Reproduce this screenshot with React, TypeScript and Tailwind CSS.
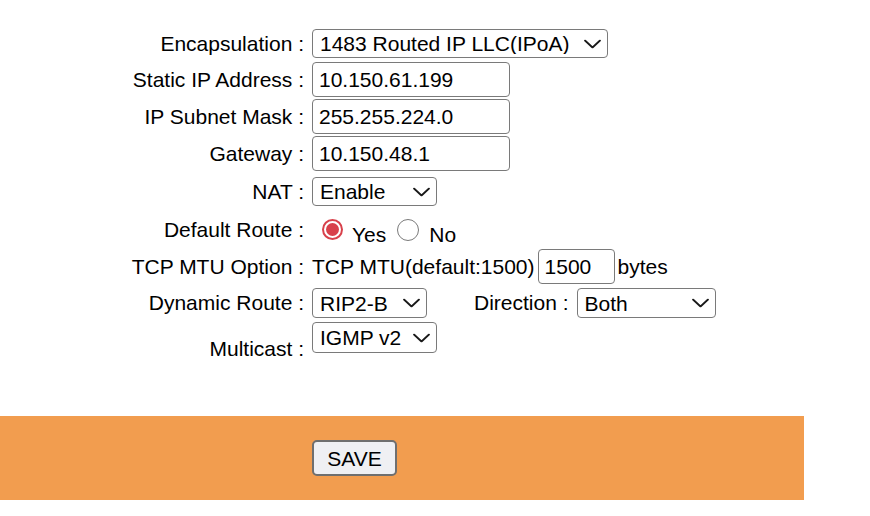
import React from 'react';

const font = { fontFamily: '"Liberation Sans", Arial, Helvetica, sans-serif' };

function Chevron() {
  return (
    <svg width="17" height="9" viewBox="0 0 17 9" fill="none" className="pointer-events-none absolute right-[7px] top-1/2 -translate-y-1/2">
      <path d="M1 1 L8.5 8 L16 1" stroke="#1a1a1a" strokeWidth="1.8" strokeLinecap="round" strokeLinejoin="round" />
    </svg>
  );
}

function Select({ value, options, w, h }: { value: string; options: string[]; w: string; h: string }) {
  return (
    <div className={`relative ${w} ${h}`}>
      <select
        defaultValue={value}
        className="h-full w-full appearance-none rounded-[4px] border border-[#7a7a7a] bg-white pl-[7px] text-[21px] leading-none text-black outline-none"
      >
        {options.map((o) => (
          <option key={o}>{o}</option>
        ))}
      </select>
      <Chevron />
    </div>
  );
}

function TextInput({ value, w }: { value: string; w: string }) {
  return (
    <input
      defaultValue={value}
      className={`${w} h-[35px] rounded-[4px] border border-[#7a7a7a] bg-white px-[6px] text-[21px] leading-none text-black outline-none`}
    />
  );
}

function Label({ children }: { children: React.ReactNode }) {
  return <div className="w-[304px] shrink-0 text-right">{children}</div>;
}

function Radio({ checked }: { checked?: boolean }) {
  return checked ? (
    <span className="flex h-[21px] w-[21px] shrink-0 items-center justify-center rounded-full border-2 border-[#d8414b] bg-white">
      <span className="block h-[13px] w-[13px] rounded-full bg-[#d8414b]" />
    </span>
  ) : (
    <span className="block h-[22px] w-[22px] shrink-0 rounded-full border border-[#7a7a7a] bg-white" />
  );
}

export default function App() {
  return (
    <div className="min-h-[516px] w-[870px] bg-white text-[21px] leading-[24px] text-black" style={font}>
      <div className="flex flex-col pt-[29px]">
        <div className="flex h-[29px] items-center gap-[8px]">
          <Label>Encapsulation :</Label>
          <Select value="1483 Routed IP LLC(IPoA)" options={['1483 Routed IP LLC(IPoA)', 'PPPoE', 'PPPoA', '1483 Bridged']} w="w-[296px]" h="h-[29px]" />
        </div>
        <div className="mt-[4px] flex h-[35px] items-center gap-[8px]">
          <Label>Static IP Address :</Label>
          <TextInput value="10.150.61.199" w="w-[198px]" />
        </div>
        <div className="mt-[2px] flex h-[35px] items-center gap-[8px]">
          <Label>IP Subnet Mask :</Label>
          <TextInput value="255.255.224.0" w="w-[198px]" />
        </div>
        <div className="mt-[2px] flex h-[35px] items-center gap-[8px]">
          <Label>Gateway :</Label>
          <TextInput value="10.150.48.1" w="w-[198px]" />
        </div>
        <div className="mt-[6px] flex h-[29px] items-center gap-[8px]">
          <Label>NAT :</Label>
          <Select value="Enable" options={['Enable', 'Disable']} w="w-[125px]" h="h-[29px]" />
        </div>
        <div className="mt-[4px] flex h-[39px] items-center gap-[8px]">
          <Label>Default Route :</Label>
          <div className="ml-[10px] flex items-center">
            <Radio checked />
            <span className="ml-[9px] pt-[10px]">Yes</span>
            <span className="ml-[11px] flex">
              <Radio />
            </span>
            <span className="ml-[10px] pt-[10px]">No</span>
          </div>
        </div>
        <div className="flex h-[35px] items-center gap-[8px]">
          <Label>TCP MTU Option :</Label>
          <div className="flex items-center">
            <span>TCP MTU(default:1500)</span>
            <input
              defaultValue="1500"
              className="ml-[3px] h-[35px] w-[77px] rounded-[4px] border border-[#7a7a7a] bg-white px-[6px] text-[21px] leading-none text-black outline-none"
            />
            <span className="ml-[3px]">bytes</span>
          </div>
        </div>
        <div className="mt-[4px] flex h-[30px] items-center gap-[8px]">
          <Label>Dynamic Route :</Label>
          <Select value="RIP2-B" options={['RIP1', 'RIP2-B', 'RIP2-M']} w="w-[115px]" h="h-[30px]" />
          <span className="ml-[39px]">Direction :</span>
          <Select value="Both" options={['None', 'Both', 'In Only', 'Out Only']} w="w-[139px]" h="h-[30px]" />
        </div>
        <div className="mt-[4px] flex items-start gap-[8px]">
          <div className="w-[304px] shrink-0 pt-[15px] text-right">Multicast :</div>
          <Select value="IGMP v2" options={['Disable', 'IGMP v1', 'IGMP v2']} w="w-[125px]" h="h-[31px]" />
        </div>
      </div>
      <div className="mt-[55px] flex h-[84px] w-[804px] items-center bg-[#f29d4f] pl-[312px]">
        <button className="h-[36px] w-[85px] rounded-[5px] border-2 border-[#6f6f6f] bg-[#eff0f3] text-[21px] leading-none text-black">
          SAVE
        </button>
      </div>
    </div>
  );
}
